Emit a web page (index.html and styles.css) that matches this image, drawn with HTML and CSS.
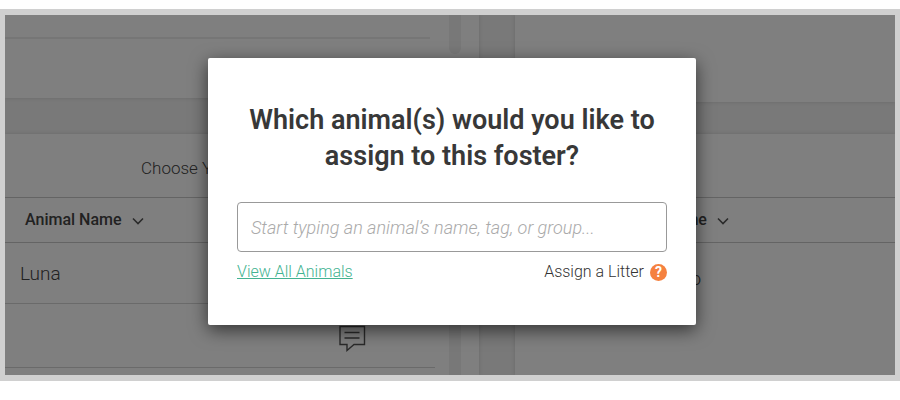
FILE: index.html
```
<!DOCTYPE html>
<html lang="en">
<head>
<meta charset="utf-8">
<meta name="viewport" content="width=device-width, initial-scale=1">
<title>Assign to foster</title>
<link rel="stylesheet" href="styles.css">
</head>
<body>
<main class="frame">
  <div class="board">
    <div class="column">
      <section class="panel panel-upper-left">
        <div class="divider"></div>
        <div class="track track-end"></div>
      </section>
      <section class="panel panel-lower">
        <h2 class="panel-title">Choose Y</h2>
        <div class="panel-head">
          <button class="sort" type="button">Animal Name
            <svg class="chevron" viewBox="0 0 12 8" aria-hidden="true"><path d="M1 1.5 6 6.5 11 1.5"/></svg>
          </button>
        </div>
        <div class="panel-body">
          <div class="rows">
            <div class="row">Luna</div>
            <div class="row row-note">
              <svg class="note" viewBox="0 0 28 28" aria-hidden="true"><path d="M2 1.500H26.500V19.500H16L9 25.500V19.500H2ZM6.500 7.500H21.500M6.500 13H21.500"/></svg>
            </div>
          </div>
          <div class="track"></div>
        </div>
      </section>
    </div>
    <div class="column">
      <section class="panel panel-upper-right"></section>
      <section class="panel panel-lower">
        <div class="panel-title"></div>
        <div class="panel-head panel-head-right">
          <button class="sort" type="button">Name
            <svg class="chevron" viewBox="0 0 12 8" aria-hidden="true"><path d="M1 1.5 6 6.5 11 1.5"/></svg>
          </button>
        </div>
        <div class="cell">o</div>
      </section>
    </div>
  </div>

  <div class="overlay">
    <form class="dialog" role="dialog" aria-labelledby="question">
      <h1 class="question"><label id="question" for="animal">Which animal(s) would you like to assign to this foster?</label></h1>
      <input class="search" id="animal" type="text" placeholder="Start typing an animal’s name, tag, or group...">
      <div class="options">
        <a class="view-all" href="#">View All Animals</a>
        <button class="litter" type="button">Assign a Litter
          <span class="help">?</span>
        </button>
      </div>
    </form>
  </div>
</main>
</body>
</html>
```
FILE: styles.css
```
* {
  box-sizing: border-box;
}

body {
  margin: 9px 0 0;
  background: #fff;
  color: #333;
  font-family: Roboto, "Liberation Sans", sans-serif;
  font-size: 16px;
  font-weight: 300;
}

button {
  padding: 0;
  border: 0;
  background: none;
  color: inherit;
  font: inherit;
}

.frame {
  position: relative;
  border: solid #d0d0d0;
  border-width: 6px 5px;
  overflow: hidden;
}

.board {
  display: grid;
  grid-template-columns: 5fr 4fr;
  gap: 36px;
  background: #f2f2f2;
  color: #444;
}

.column {
  display: flex;
  flex-direction: column;
  justify-content: space-between;
}

.panel {
  background: #fff;
  box-shadow: 0 0 4px rgba(0, 0, 0, 0.14);
}

.panel-upper-left {
  display: flex;
  justify-content: space-between;
  height: 83px;
  margin-bottom: 36px;
  padding-right: 18px;
}

.panel-upper-right {
  height: 87px;
}

.panel-lower {
  min-height: 241px;
}

.divider {
  width: 425px;
  height: 24px;
  border-bottom: 2px solid #ececec;
}

.track {
  width: 12px;
  background: #f0f0f0;
}

.track-end {
  height: 39px;
  border-radius: 0 0 6px 6px;
}

.panel-title {
  height: 63px;
  margin: 0;
  padding: 24px 0 0 136px;
  font-size: 17px;
  font-weight: 300;
  line-height: 20px;
}

.panel-head {
  display: flex;
  align-items: center;
  height: 46px;
  padding-left: 20px;
  border: solid #c8c8c8;
  border-width: 1px 0;
}

.panel-head-right {
  padding-left: 149px;
}

.sort {
  display: flex;
  align-items: center;
  gap: 10px;
  padding-bottom: 2px;
  font-weight: 500;
}

.chevron {
  width: 12px;
  height: 8px;
  margin-top: 4px;
  fill: none;
  stroke: #555;
  stroke-width: 1.6;
}

.panel-body {
  display: flex;
  justify-content: space-between;
  height: 132px;
  padding-right: 18px;
}

.rows {
  width: 430px;
}

.row {
  display: flex;
  align-items: center;
  height: 61px;
  padding-left: 15px;
  border-bottom: 1px solid #d4d4d4;
  font-size: 19px;
}

.row-note {
  align-items: flex-start;
  justify-content: flex-end;
  height: 64px;
  padding: 21px 69px 0 0;
}

.note {
  width: 28px;
  height: 28px;
  fill: none;
  stroke: #555;
  stroke-width: 1.4;
}

.cell {
  padding: 26px 0 0 175px;
  font-size: 19px;
  line-height: 20px;
}

.overlay {
  position: absolute;
  inset: 0;
  display: flex;
  align-items: flex-start;
  justify-content: center;
  padding: 43px 0 0 4px;
  background: rgba(0, 0, 0, 0.5);
}

.dialog {
  width: 100%;
  max-width: 488px;
  padding: 44px 29px 43px;
  border-radius: 2px;
  background: #fff;
  box-shadow: 0 5px 18px rgba(0, 0, 0, 0.6);
}

.question {
  margin: 0 0 28px;
  color: #383838;
  font-size: 27px;
  font-weight: 600;
  line-height: 36px;
  text-align: center;
}

.search {
  display: block;
  width: 100%;
  height: 50px;
  padding: 0 13px;
  border: 1px solid #999;
  border-radius: 4px;
  background: #fff;
  color: #333;
  font: 300 18px Roboto, "Liberation Sans", sans-serif;
}

.search::placeholder {
  color: #aaa;
  font-style: italic;
  opacity: 1;
}

.options {
  display: flex;
  align-items: center;
  justify-content: space-between;
  margin-top: 10px;
  line-height: 20px;
}

.view-all {
  color: #43b391;
}

.litter {
  display: flex;
  align-items: center;
  gap: 6px;
}

.help {
  width: 17px;
  height: 17px;
  border-radius: 50%;
  background: #f5813f;
  color: #fff;
  font-size: 14px;
  font-weight: 700;
  line-height: 17px;
  text-align: center;
}
```
